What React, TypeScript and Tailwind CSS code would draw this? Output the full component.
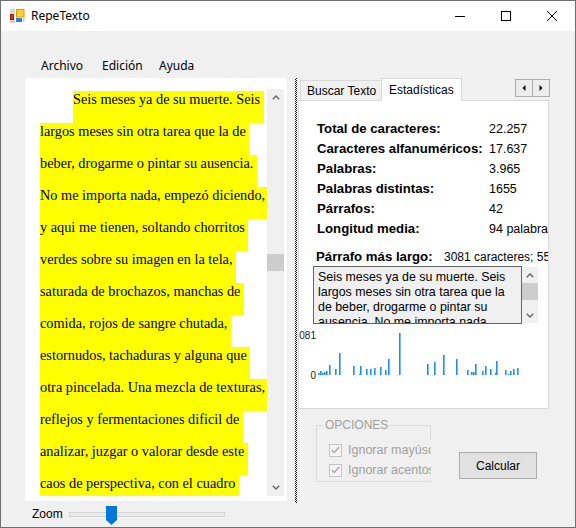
import React from "react";

const lines = [
  "Seis meses ya de su muerte. Seis",
  "largos meses sin otra tarea que la de",
  "beber, drogarme o pintar su ausencia.",
  "No me importa nada, empezó diciendo,",
  "y aqui me tienen, soltando chorritos",
  "verdes sobre su imagen en la tela,",
  "saturada de brochazos, manchas de",
  "comida, rojos de sangre chutada,",
  "estornudos, tachaduras y alguna que",
  "otra pincelada. Una mezcla de texturas,",
  "reflejos y fermentaciones dificil de",
  "analizar, juzgar o valorar desde este",
  "caos de perspectiva, con el cuadro",
];

const stats: [string, string][] = [
  ["Total de caracteres:", "22.257"],
  ["Caracteres alfanuméricos:", "17.637"],
  ["Palabras:", "3.965"],
  ["Palabras distintas:", "1655"],
  ["Párrafos:", "42"],
  ["Longitud media:", "94 palabras"],
];

const bars: [number, number][] = [
  [318, 2], [320, 4], [322, 2], [324, 3], [326, 4], [329, 10], [335, 6], [339, 22],
  [353, 9], [359, 1], [360, 9], [366, 6], [370, 6], [374, 7], [380, 8], [385, 5],
  [388, 16], [399, 42], [427, 11], [434, 13], [443, 20], [456, 16], [467, 5],
  [471, 3], [473, 3], [475, 11], [482, 4], [485, 9], [490, 6], [495, 2], [496, 14],
  [505, 5], [508, 1], [510, 4], [513, 6], [517, 7],
];

function Up() {
  return (
    <svg width="8" height="5" viewBox="0 0 8 5">
      <polyline points="0.8,4.2 4,1 7.2,4.2" fill="none" stroke="#606060" strokeWidth="1.3" />
    </svg>
  );
}
function Down() {
  return (
    <svg width="8" height="5" viewBox="0 0 8 5">
      <polyline points="0.8,0.8 4,4 7.2,0.8" fill="none" stroke="#606060" strokeWidth="1.3" />
    </svg>
  );
}

function Check() {
  return (
    <div className="w-[13px] h-[13px] border border-[#c4c4c4] bg-[#f4f4f4] flex items-center justify-center shrink-0">
      <svg width="9" height="8" viewBox="0 0 9 8">
        <polyline points="0.8,4 3.3,6.5 8.2,1" fill="none" stroke="#a8a8a8" strokeWidth="1.3" />
      </svg>
    </div>
  );
}

export default function App() {
  return (
    <div className="w-[576px] h-[528px] border border-[#6f6f6f] bg-[#f0f0f0] overflow-hidden flex flex-col font-['Liberation_Sans',Arial,sans-serif] text-black">
      {/* Title bar */}
      <div className="h-[30px] bg-white flex items-center shrink-0">
        <svg className="ml-[8px]" width="16" height="16" viewBox="0 0 16 16">
          <rect x="1" y="1" width="5" height="5" fill="#d6d6d6" />
          <rect x="1.5" y="6.5" width="3" height="5" fill="#e23a24" stroke="#a01a10" strokeWidth="1" />
          <rect x="1" y="12" width="5" height="3" fill="#cfcfcf" />
          <rect x="7.5" y="1.5" width="7.5" height="7.5" fill="#ffd23c" stroke="#e39a00" strokeWidth="1" />
          <rect x="7" y="10" width="6" height="4" fill="#2f7fd8" />
          <rect x="13.5" y="10" width="2" height="4" fill="#d0d0d0" />
        </svg>
        <span className="ml-[6px] text-[12px] leading-none font-['Noto_Sans',sans-serif]">RepeTexto</span>
        <div className="flex-1" />
        <div className="w-[46px] h-[30px] flex items-center justify-center">
          <svg width="10" height="10" viewBox="0 0 10 10">
            <line x1="0" y1="5.5" x2="10" y2="5.5" stroke="#000" strokeWidth="1" />
          </svg>
        </div>
        <div className="w-[46px] h-[30px] flex items-center justify-center">
          <svg width="10" height="10" viewBox="0 0 10 10">
            <rect x="0.5" y="0.5" width="9" height="9" fill="none" stroke="#000" strokeWidth="1" />
          </svg>
        </div>
        <div className="w-[46px] h-[30px] flex items-center justify-center">
          <svg width="10" height="10" viewBox="0 0 10 10">
            <line x1="0" y1="0" x2="10" y2="10" stroke="#000" strokeWidth="1" />
            <line x1="10" y1="0" x2="0" y2="10" stroke="#000" strokeWidth="1" />
          </svg>
        </div>
      </div>

      {/* Menu */}
      <div className="h-[47px] pt-[25px] pl-[40px] flex text-[12px] leading-[20px] font-['Noto_Sans',sans-serif] shrink-0">
        <span className="w-[61px]">Archivo</span>
        <span className="w-[57px]">Edición</span>
        <span>Ayuda</span>
      </div>

      {/* Main */}
      <div className="flex items-start">
        {/* Left column */}
        <div className="ml-[24px] w-[262px] flex flex-col">
          <div className="h-[423px] bg-white pt-[11px] pb-[5px] pl-[15px] pr-[3px] flex">
            <div className="flex-1 overflow-hidden font-['Liberation_Serif','Times_New_Roman',serif] text-[14.3px]">
              {lines.map((l, i) => (
                <div key={i} className="h-[32px]">
                  <span
                    className={
                      i === 0
                        ? "ml-[33px] inline-block h-[32px] pr-[3.5px] bg-[#ffff00] whitespace-pre leading-[17px]"
                        : "inline-block h-[32px] pr-[3.5px] bg-[#ffff00] whitespace-pre leading-[17px]"
                    }
                  >
                    {l}
                  </span>
                </div>
              ))}
            </div>
            <div className="w-[17px] h-full bg-[#f0f0f0] flex flex-col shrink-0">
              <div className="h-[17px] flex items-center justify-center">
                <Up />
              </div>
              <div className="flex-1">
                <div className="mt-[148px] h-[17px] bg-[#cdcdcd]" />
              </div>
              <div className="h-[17px] flex items-center justify-center">
                <Down />
              </div>
            </div>
          </div>
          <div className="h-[26px] flex items-center pl-[7px]">
            <span className="text-[12px] leading-none">Zoom</span>
            <div className="ml-[6px] w-[156px] h-[5px] bg-[#e7eaea] border border-[#d6d6d6] relative">
              <svg className="absolute left-[36px] top-[-7px]" width="11" height="19" viewBox="0 0 11 19">
                <path d="M0 0 H11 V14 L5.5 19 L0 14 Z" fill="#0078d7" />
              </svg>
            </div>
          </div>
        </div>

        {/* Splitter */}
        <div className="ml-[8px] w-[2px] h-[425px] bg-[image:conic-gradient(#111_25%,#fff_0_50%,#111_0_75%,#fff_0)] bg-[length:2px_2px]" />

        {/* Right column */}
        <div className="ml-[1px] w-[252px] flex flex-col">
          <div className="h-[22px] flex items-end">
            <div className="ml-[2px] w-[82px] h-[20px] border border-b-0 border-[#d9d9d9] bg-[#f0f0f0] text-[12px] leading-[21px] pl-[6px] whitespace-nowrap">
              Buscar Texto
            </div>
            <div className="relative z-10 -ml-px -mb-px w-[81px] h-[23px] bg-white border border-b-0 border-[#d9d9d9] text-[12px] leading-[22px] pl-[7px] whitespace-nowrap">
              Estadísticas
            </div>
            <div className="ml-auto self-start mt-[1px] flex">
              <div className="w-[18px] h-[18px] border border-[#adadad] bg-[#ececec] flex items-center justify-center">
                <svg width="4" height="6" viewBox="0 0 4 6">
                  <polygon points="3.5,0 3.5,6 0.5,3" fill="#000" />
                </svg>
              </div>
              <div className="-ml-px w-[18px] h-[18px] border border-[#adadad] bg-[#ececec] flex items-center justify-center">
                <svg width="4" height="6" viewBox="0 0 4 6">
                  <polygon points="0.5,0 0.5,6 3.5,3" fill="#000" />
                </svg>
              </div>
            </div>
          </div>

          {/* Tab page */}
          <div className="w-[251px] h-[309px] bg-white border border-[#d9d9d9] overflow-hidden">
            <div className="pt-[18px] pl-[18px] grid grid-cols-[172px_auto] leading-[20px] whitespace-nowrap">
              {stats.map(([k, v]) => (
                <React.Fragment key={k}>
                  <div className="text-[13.2px] font-bold h-[20px]">{k}</div>
                  <div className="text-[12.5px] h-[20px]">{v}</div>
                </React.Fragment>
              ))}
            </div>
            <div className="mt-[9px] ml-[17px] flex h-[18px] leading-[18px] whitespace-nowrap">
              <div className="w-[128px] text-[13.2px] font-bold shrink-0">Párrafo más largo:</div>
              <div className="text-[12px]">3081 caracteres; 556 palabras</div>
            </div>
            <div className="ml-[14px] flex">
              <div className="w-[209px] h-[58px] border border-[#646464] bg-[#f0f0f0] pl-[4px] pt-[3px] text-[12.4px] leading-[15px] overflow-hidden whitespace-nowrap">
                <div>Seis meses ya de su muerte. Seis</div>
                <div>largos meses sin otra tarea que la</div>
                <div>de beber, drogarme o pintar su</div>
                <div>ausencia. No me importa nada,</div>
              </div>
              <div className="w-[16px] h-[56px] mt-px bg-[#f0f0f0] flex flex-col">
                <div className="h-[16px] flex items-center justify-center">
                  <Up />
                </div>
                <div className="h-[17px] bg-[#cdcdcd]" />
                <div className="flex-1" />
                <div className="h-[16px] flex items-center justify-center">
                  <Down />
                </div>
              </div>
            </div>
            <svg className="block mt-[2px]" width="248" height="60" viewBox="0 0 248 60">
              <text x="17" y="13" textAnchor="end" fontSize="10" fill="#1a1a1a" fontFamily="Liberation Sans, Arial, sans-serif">3081</text>
              <text x="17" y="53" textAnchor="end" fontSize="10" fill="#1a1a1a" fontFamily="Liberation Sans, Arial, sans-serif">0</text>
              {bars.map(([x, h], i) => (
                <rect key={i} x={x - 299} y={49 - h} width="1.6" height={h} fill="#1e8fef" />
              ))}
            </svg>
          </div>

          {/* Options + button */}
          <div className="flex items-start">
            <fieldset className="ml-[18px] mt-[9px] w-[115px] min-w-0 border border-[#dcdcdc] pb-[1px] shrink-0">
              <legend className="ml-[7px] px-[1px] text-[12px] leading-[14px] text-[#a0a0a0]">OPCIONES</legend>
              <div className="mt-[8px]">
                <div className="-mr-px h-[20px] flex items-center gap-[6px] pl-[12px] bg-[#f0f0f0] overflow-hidden whitespace-nowrap text-[12.5px] text-[#a0a0a0]">
                  <Check />
                  <span>Ignorar mayúsculas</span>
                </div>
                <div className="-mr-px h-[20px] flex items-center gap-[6px] pl-[12px] bg-[#f0f0f0] overflow-hidden whitespace-nowrap text-[12.5px] text-[#a0a0a0]">
                  <Check />
                  <span>Ignorar acentos</span>
                </div>
              </div>
            </fieldset>
            <button className="ml-[28px] mt-[43px] w-[78px] h-[27px] border border-[#adadad] bg-[#e1e1e1] text-[12px] leading-none shrink-0">
              Calcular
            </button>
          </div>
        </div>
      </div>
    </div>
  );
}
